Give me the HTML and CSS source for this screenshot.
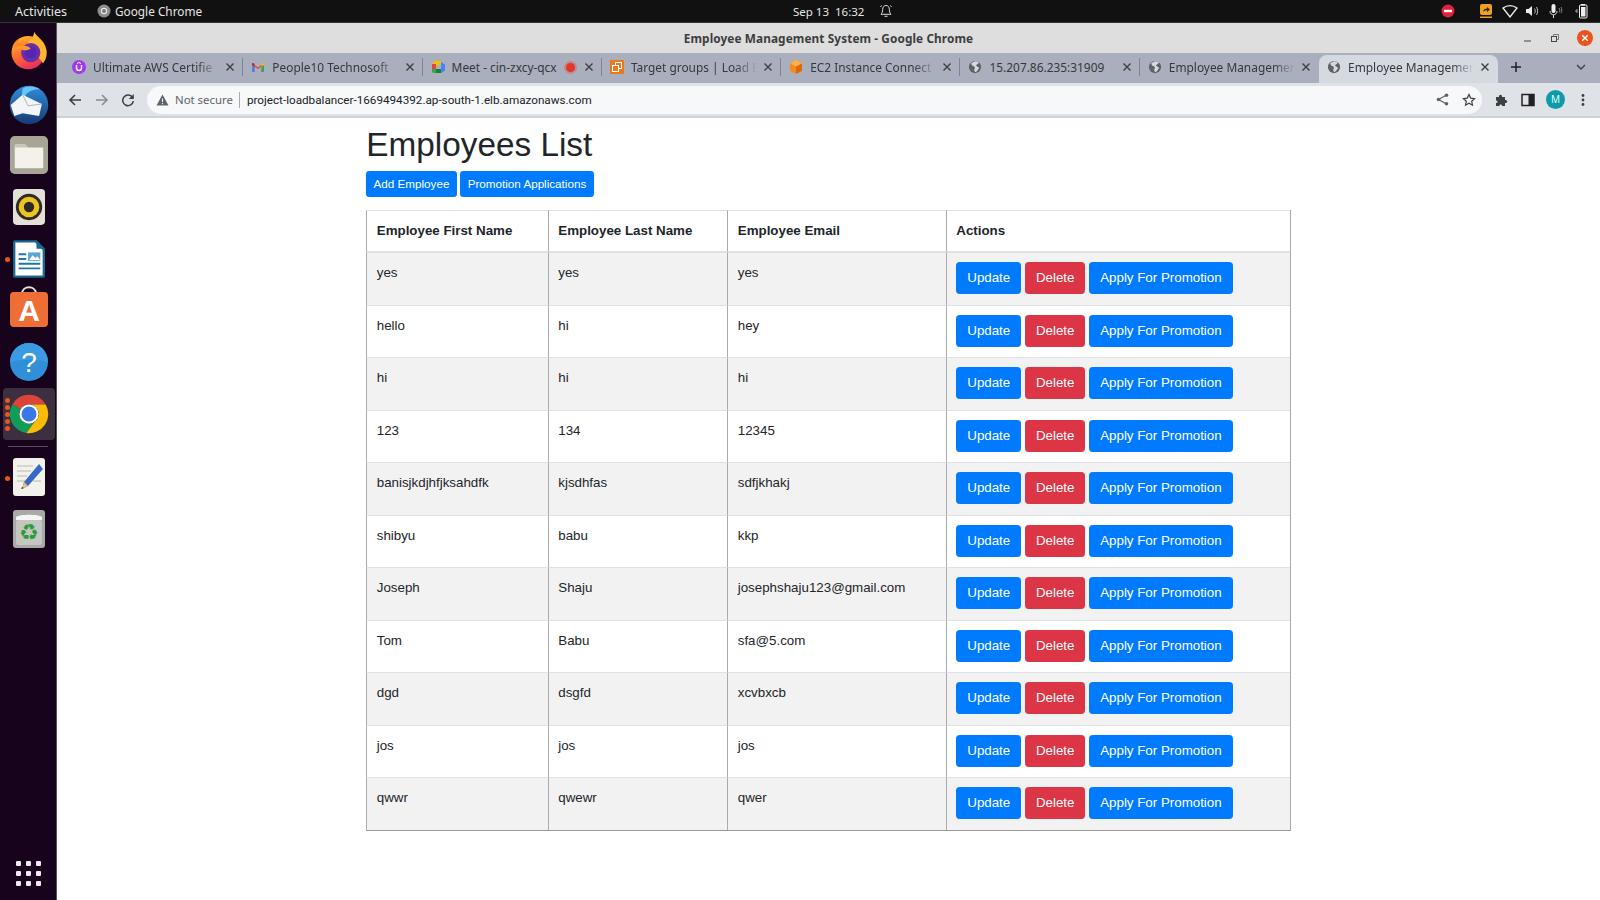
FILE: index.html
```html
<!DOCTYPE html>
<html lang="en">
<head>
  <meta charset="UTF-8">
  <title>Employee Management System</title>
  <link rel="stylesheet" href="styles.css">
</head>
<body>
  <svg class="defs" width="0" height="0">
    <defs>
      <symbol id="globe" viewBox="0 0 16 16">
        <circle cx="8" cy="8" r="7" fill="#5f6368"/>
        <path d="M8 1.500c-1 1-3.500 1-4.500 2.500L5 6.500l2 .5 1 2-1 2 1 3c2-1 3-2 3.500-3.500L13 9l-2.500-1.500L9 6l2-1.500L12.500 3C11 2 9.500 1.500 8 1.500z" fill="#d5d8df"/>
      </symbol>
      <symbol id="close-x" viewBox="0 0 10 10">
        <path d="M1.500 1.500l7 7M8.500 1.500l-7 7" stroke="#3c4043" stroke-width="1.400" fill="none"/>
      </symbol>
      <linearGradient id="fx" x1="0.2" y1="0" x2="0.7" y2="1">
        <stop offset="0" stop-color="#ffbd2e"/>
        <stop offset="0.5" stop-color="#ff6a2b"/>
        <stop offset="1" stop-color="#e8256a"/>
      </linearGradient>
      <linearGradient id="tb" x1="0" y1="0" x2="0" y2="1">
        <stop offset="0" stop-color="#2f8fdc"/>
        <stop offset="1" stop-color="#163a74"/>
      </linearGradient>
    </defs>
  </svg>

  <header class="topbar">
    <span class="activities">Activities</span>
    <span class="app-name">
      <svg width="14" height="14" viewBox="0 0 14 14"><circle cx="7" cy="7" r="6.500" fill="#8d8d8d"/><circle cx="7" cy="7" r="3.200" fill="#e8e8e8"/><circle cx="7" cy="7" r="2" fill="#777"/></svg>
      Google Chrome
    </span>
    <span class="clock">Sep 13&nbsp; 16:32</span>
    <svg class="bell" width="14" height="14" viewBox="0 0 14 14"><path d="M7 1.500c-2.300 0-3.300 1.700-3.300 3.800 0 2.500-.7 3.700-1.700 5h10c-1-1.300-1.700-2.500-1.700-5C10.300 3.200 9.300 1.500 7 1.500zM5.500 12.300h3M1.500 3l1-1.500M12.500 3l-1-1.500" fill="none" stroke="#ddd" stroke-width="1"/></svg>
    <div class="tray">
      <svg class="tray-stop" width="14" height="14" viewBox="0 0 14 14"><circle cx="7" cy="7" r="6.500" fill="#e0233c"/><rect x="3" y="5.800" width="8" height="2.400" fill="#fff"/></svg>
      <svg class="tray-share" width="14" height="16" viewBox="0 0 14 16"><rect x="1" y="1" width="12" height="11" rx="2" fill="#f0a020"/><path d="M4 9c.3-2.500 2-3.500 4-3.500V4l3 2.500L8 9V7.300C6.500 7.300 5 7.800 4 9z" fill="#3a2500"/><rect x="1" y="13.500" width="12" height="1.500" fill="#f0a020"/></svg>
      <svg class="tray-wifi" width="16" height="14" viewBox="0 0 16 14"><path d="M1 4c4.200-3.300 9.800-3.300 14 0L8 13z" fill="none" stroke="#eee" stroke-width="1.300"/></svg>
      <svg class="tray-sound" width="16" height="14" viewBox="0 0 16 14"><path d="M1 5h2.500L7 2v10L3.500 9H1z" fill="#eee"/><path d="M9.500 4.500c1 1.500 1 3.500 0 5M11.500 3c1.500 2.500 1.500 5.500 0 8" fill="none" stroke="#bbb" stroke-width="1"/></svg>
      <svg class="tray-mic" width="16" height="16" viewBox="0 0 16 16"><rect x="3.500" y="1" width="4" height="9" rx="2" fill="#eee"/><path d="M2 8c0 5 7 5 7 0M5.500 12v3" fill="none" stroke="#ddd" stroke-width="1"/><path d="M11 5c1 1.500 1 3 0 4.500M13 4c1 2 1 4 0 6" fill="none" stroke="#888" stroke-width="1"/></svg>
      <svg class="tray-battery" width="14" height="16" viewBox="0 0 14 16"><path d="M3 6v4M1 8h2" stroke="#aaa" stroke-width="1"/><rect x="5.500" y="2" width="7.500" height="13" rx="1" fill="none" stroke="#eee" stroke-width="1"/><rect x="7" y="1" width="4" height="1.500" fill="#eee"/><rect x="7" y="4" width="4.500" height="9.500" fill="#eee"/></svg>
    </div>
  </header>

  <div class="desktop">
    <nav class="dock">
      <div class="dock-item">
        <svg class="icon-firefox" width="42" height="42" viewBox="0 0 48 48">
          <circle cx="23" cy="27" r="19" fill="url(#fx)"/>
          <path d="M30 3c2 6 12 9 14 21 1 6-1 12-4 15l-10-13-8-10c3-3 7-6 8-13z" fill="#ffb52c"/>
          <path d="M5 20c2-5 5-8 8-9-1 2-1 4 0 5 3-2 7-2 10-1l-6 6z" fill="#ff8a22"/>
          <circle cx="26" cy="27" r="11" fill="#6b2ea8"/>
          <circle cx="26" cy="27" r="7" fill="#5527b0"/>
          <path d="M9 21c5-3 12-3 17 1-3 3-8 3-11 1-2-1-4-1-6-2z" fill="#ff9a2a"/>
        </svg>
      </div>
      <div class="dock-item">
        <svg width="44" height="44" viewBox="0 0 48 48">
          <circle cx="24" cy="25" r="21" fill="url(#tb)"/>
          <path d="M17 7c5-3 13-3 19 1-7 0-13 2-16 7l-4 2z" fill="#6cc4f5"/>
          <path d="M4 25l13-11 21 10-3 13-18-3-9 3z" fill="#f3f5f8"/>
          <path d="M17 14l6 12 15-2" fill="none" stroke="#9fb2c8" stroke-width="1"/>
        </svg>
      </div>
      <div class="dock-item">
        <svg width="38" height="38" viewBox="0 0 40 40">
          <rect width="40" height="40" rx="5" fill="#a8a496"/>
          <path d="M6 9h10l3 3h15a1 1 0 0 1 1 1v20a1 1 0 0 1-1 1H6a1 1 0 0 1-1-1V10a1 1 0 0 1 1-1z" fill="#f4f1ea"/>
          <path d="M6 9h10l3 3H5v-2a1 1 0 0 1 1-1z" fill="#c9c5b8"/>
        </svg>
      </div>
      <div class="dock-item">
        <svg width="32" height="38" viewBox="0 0 34 38">
          <rect width="34" height="38" rx="4" fill="#e4e0d8"/>
          <circle cx="17" cy="19" r="14" fill="#2f2c28"/>
          <circle cx="17" cy="19" r="11" fill="#eec51d"/>
          <circle cx="17" cy="19" r="5.500" fill="#2b2a26"/>
        </svg>
      </div>
      <div class="dock-item has-dot">
        <svg width="32" height="38" viewBox="0 0 34 40">
          <path d="M2 0h23l9 9v29a2 2 0 0 1-2 2H2a2 2 0 0 1-2-2V2a2 2 0 0 1 2-2z" fill="#18678f"/>
          <path d="M2.500 2.500h21l8 8v27h-29z" fill="#fff"/>
          <path d="M25 0l9 9h-9z" fill="#18678f"/>
          <path d="M6 15h8M6 20h8M6 25h23M6 30h23" stroke="#1b78a8" stroke-width="2"/>
          <rect x="16" y="13" width="13" height="9" fill="#5aa7d6"/>
          <path d="M17 21l4-5 3 3 2-2 3 4z" fill="#fff"/>
        </svg>
      </div>
      <div class="dock-item">
        <svg class="icon-bag" width="38" height="42" viewBox="0 0 38 42">
          <path d="M12 9c0-9 14-9 14 0" fill="none" stroke="#e8e2dc" stroke-width="2"/>
          <rect y="7" width="38" height="35" rx="4" fill="#ee6e36"/>
          <text x="19" y="36" class="bag-letter">A</text>
        </svg>
      </div>
      <div class="dock-item">
        <svg width="38" height="38" viewBox="0 0 38 38">
          <circle cx="19" cy="19" r="19" fill="#2f8fd8"/>
          <path d="M0 19a19 19 0 0 1 38 0c-12-3-26-3-38 0z" fill="#3b9be2"/>
          <text x="19" y="29" class="help-mark">?</text>
        </svg>
      </div>
      <div class="dock-item is-active">
        <span class="dots"><i></i><i></i><i></i><i></i><i></i></span>
        <svg width="42" height="42" viewBox="0 0 48 48">
          <path d="M24 2A22 22 0 0 1 43.050 13H24A11 11 0 0 0 14.470 18.500L4.950 13A22 22 0 0 1 24 2z" fill="#db4437"/>
          <path d="M4.950 13A22 22 0 0 0 21 45.800L30 33.500A11 11 0 0 1 14.470 29.500 11 11 0 0 1 14.470 18.500z" fill="#0f9d58"/>
          <path d="M43.050 13A22 22 0 0 1 21 45.800L30 33.500A11 11 0 0 0 33.500 18.500 11 11 0 0 0 24 13z" fill="#fbbc05"/>
          <circle cx="24" cy="24" r="11" fill="#fff"/>
          <circle cx="24" cy="24" r="8.500" fill="#3b78e7"/>
        </svg>
      </div>
      <hr class="dock-sep">
      <div class="dock-item has-dot">
        <svg width="32" height="38" viewBox="0 0 32 38">
          <rect width="32" height="38" rx="3" fill="#f3f1ec"/>
          <path d="M4 8h16M4 13h14M4 18h10M4 23h8M20 23h8" stroke="#bbb8ae" stroke-width="1"/>
          <path d="M26 6l4 5-15 17-6 3 2-7z" fill="#3668c4"/>
          <path d="M11 24l4 4-6 3z" fill="#e8c07a"/>
          <path d="M9 29l2 1-3 1z" fill="#333"/>
        </svg>
      </div>
      <div class="dock-item">
        <svg width="32" height="38" viewBox="0 0 32 38">
          <rect width="32" height="38" rx="3" fill="#a7aaa5"/>
          <path d="M3 7c3-3 23-3 26 0v3H3z" fill="#f5f5f3"/>
          <rect x="3" y="10" width="26" height="25" rx="2" fill="#c4c6c1"/>
          <text x="16" y="30" class="recycle">♻</text>
        </svg>
      </div>
      <div class="apps-grid">
        <i></i><i></i><i></i><i></i><i></i><i></i><i></i><i></i><i></i>
      </div>
    </nav>

    <div class="window">
      <div class="titlebar">
        <span class="win-title">Employee Management System - Google Chrome</span>
        <div class="win-controls">
          <svg width="10" height="10" viewBox="0 0 10 10"><path d="M1 8h7" stroke="#444" stroke-width="1"/></svg>
          <svg width="10" height="10" viewBox="0 0 10 10"><rect x="1.500" y="3.500" width="5" height="5" fill="none" stroke="#444"/><path d="M3.500 3.500v-2h5v5h-2" fill="none" stroke="#777"/></svg>
          <svg width="16" height="16" viewBox="0 0 16 16"><circle cx="8" cy="8" r="8" fill="#e95420"/><path d="M5.200 5.200l5.600 5.600M10.800 5.200l-5.600 5.600" stroke="#fff" stroke-width="1.400"/></svg>
        </div>
      </div>

      <div class="tabstrip">
        <div class="tab">
          <svg class="favicon" viewBox="0 0 14 14"><circle cx="7" cy="7" r="7" fill="#a435f0"/><path d="M4.500 5v3a2.500 2.500 0 0 0 5 0V5" fill="none" stroke="#fff" stroke-width="1.400"/><path d="M5 3.500l2-1 2 1" fill="none" stroke="#fff"/></svg>
          <span class="tab-title">Ultimate AWS Certifie</span>
          <svg class="tab-close"><use href="#close-x"/></svg>
        </div>
        <div class="tab">
          <svg class="favicon" viewBox="0 0 14 14"><path d="M1 3v9h2.500V6.500L7 9l3.500-2.500V12H13V3l-6 4.500z" fill="#ea4335"/><path d="M1 3v3l2.500 2V3.500z" fill="#c5221f"/><path d="M13 3v3l-2.500 2V3.500z" fill="#fbbc04"/><path d="M10.500 6.500V12H13V5z" fill="#34a853"/><path d="M1 5v7h2.500V6.500z" fill="#4285f4"/></svg>
          <span class="tab-title">People10 Technosoft</span>
          <svg class="tab-close"><use href="#close-x"/></svg>
        </div>
        <div class="tab">
          <svg class="favicon" viewBox="0 0 14 14"><path d="M1 4l3-3h6v4H5v4H1z" fill="#fbbc04"/><path d="M1 9h4v4H2.500A1.500 1.500 0 0 1 1 11.500z" fill="#34a853"/><path d="M5 9h5v4H5z" fill="#188038"/><path d="M10 2v11l4-2.500v-6z" fill="#4285f4"/><path d="M1 4h4v5H1z" fill="#ea4335"/></svg>
          <span class="tab-title no-fade">Meet - cin-zxcy-qcx</span>
          <span class="rec-dot"></span>
          <svg class="tab-close"><use href="#close-x"/></svg>
        </div>
        <div class="tab">
          <svg class="favicon" viewBox="0 0 14 14"><rect width="14" height="14" rx="1" fill="#e8791c"/><rect x="5.500" y="2.500" width="6" height="6" fill="none" stroke="#fff"/><rect x="2.500" y="5.500" width="6" height="6" fill="#e8791c" stroke="#fff"/></svg>
          <span class="tab-title">Target groups | Load E</span>
          <svg class="tab-close"><use href="#close-x"/></svg>
        </div>
        <div class="tab">
          <svg class="favicon" viewBox="0 0 14 14"><path d="M7 0l6 3.200v7.600L7 14l-6-3.200V3.200z" fill="#f58a1f"/><path d="M7 6.500L13 3.200v7.600L7 14z" fill="#d96a10"/><path d="M7 6.500L1 3.200 7 0l6 3.200z" fill="#fbb04a"/></svg>
          <span class="tab-title">EC2 Instance Connect</span>
          <svg class="tab-close"><use href="#close-x"/></svg>
        </div>
        <div class="tab">
          <svg class="favicon"><use href="#globe"/></svg>
          <span class="tab-title no-fade">15.207.86.235:31909</span>
          <svg class="tab-close"><use href="#close-x"/></svg>
        </div>
        <div class="tab before-active">
          <svg class="favicon"><use href="#globe"/></svg>
          <span class="tab-title">Employee Managemer</span>
          <svg class="tab-close"><use href="#close-x"/></svg>
        </div>
        <div class="tab tab-active">
          <svg class="favicon"><use href="#globe"/></svg>
          <span class="tab-title">Employee Managemer</span>
          <svg class="tab-close"><use href="#close-x"/></svg>
        </div>
        <svg class="new-tab" width="12" height="12" viewBox="0 0 12 12"><path d="M6 1v10M1 6h10" stroke="#202124" stroke-width="1.500"/></svg>
        <svg class="tab-search" width="10" height="6" viewBox="0 0 10 6"><path d="M1 1l4 4 4-4" fill="none" stroke="#3c4043" stroke-width="1.400"/></svg>
      </div>

      <div class="toolbar">
        <svg class="nav-icon" width="14" height="14" viewBox="0 0 14 14"><path d="M13 7H2M7 2L2 7l5 5" fill="none" stroke="#3c4043" stroke-width="1.600"/></svg>
        <svg class="nav-icon nav-forward" width="14" height="14" viewBox="0 0 14 14"><path d="M1 7h11M7 2l5 5-5 5" fill="none" stroke="#8b8f94" stroke-width="1.600"/></svg>
        <svg class="nav-icon nav-reload" width="14" height="14" viewBox="0 0 14 14"><path d="M11.500 4.500A5.300 5.300 0 1 0 12.300 8" fill="none" stroke="#3c4043" stroke-width="1.500"/><path d="M12.800 1v5h-5z" fill="#3c4043"/></svg>
        <div class="omnibox">
          <svg class="warn" width="13" height="12" viewBox="0 0 13 12"><path d="M6.500 .5l6 11H.5z" fill="#5f6368"/><path d="M6.500 4.500v3.500M6.500 9v1.200" stroke="#f6f8fa" stroke-width="1.100"/></svg>
          <span class="not-secure">Not secure</span>
          <span class="omni-sep"></span>
          <span class="url">project-loadbalancer-1669494392.ap-south-1.elb.amazonaws.com</span>
          <svg class="share" width="13" height="13" viewBox="0 0 13 13"><path d="M10.500 2L2.500 6.500l8 4.500" fill="none" stroke="#5f6368" stroke-width="1.200"/><circle cx="10.500" cy="2.200" r="1.800" fill="#5f6368"/><circle cx="2.500" cy="6.500" r="1.800" fill="#5f6368"/><circle cx="10.500" cy="10.800" r="1.800" fill="#5f6368"/></svg>
          <svg class="star" width="14" height="14" viewBox="0 0 14 14"><path d="M7 1.500l1.700 3.600 3.900.5-2.900 2.700.8 3.900L7 10.300l-3.500 1.900.8-3.900L1.400 5.600l3.900-.5z" fill="none" stroke="#3c4043" stroke-width="1.200"/></svg>
        </div>
        <svg class="puzzle" width="14" height="14" viewBox="0 0 14 14"><path d="M1 4h3c-.5-3 3.500-3 3 0h3v3c3-.5 3 3.500 0 3v3H7c.5-2-3-2-2.500 0H1v-3c2 .5 2-3 0-2.500z" fill="#3c4043"/></svg>
        <svg class="panel" width="14" height="14" viewBox="0 0 14 14"><rect x="1" y="1.500" width="12" height="11" fill="none" stroke="#202124" stroke-width="1.500"/><rect x="7.500" y="1.500" width="5.500" height="11" fill="#202124"/></svg>
        <span class="avatar">M</span>
        <svg class="kebab" width="4" height="14" viewBox="0 0 4 14"><circle cx="2" cy="2.500" r="1.400" fill="#3c4043"/><circle cx="2" cy="7" r="1.400" fill="#3c4043"/><circle cx="2" cy="11.500" r="1.400" fill="#3c4043"/></svg>
      </div>

      <main class="page">
        <div class="container">
          <h1>Employees List</h1>
          <div class="top-actions">
            <a class="btn btn-sm btn-primary">Add Employee</a>
            <a class="btn btn-sm btn-primary">Promotion Applications</a>
          </div>
          <table class="employees">
            <colgroup>
              <col class="col-first"><col class="col-last"><col class="col-email"><col class="col-actions">
            </colgroup>
            <thead>
              <tr><th>Employee First Name</th><th>Employee Last Name</th><th>Employee Email</th><th>Actions</th></tr>
            </thead>
            <tbody>
              <tr><td>yes</td><td>yes</td><td>yes</td><td class="actions"><a class="btn btn-primary">Update</a> <a class="btn btn-danger">Delete</a> <a class="btn btn-primary">Apply For Promotion</a></td></tr>
              <tr><td>hello</td><td>hi</td><td>hey</td><td class="actions"><a class="btn btn-primary">Update</a> <a class="btn btn-danger">Delete</a> <a class="btn btn-primary">Apply For Promotion</a></td></tr>
              <tr><td>hi</td><td>hi</td><td>hi</td><td class="actions"><a class="btn btn-primary">Update</a> <a class="btn btn-danger">Delete</a> <a class="btn btn-primary">Apply For Promotion</a></td></tr>
              <tr><td>123</td><td>134</td><td>12345</td><td class="actions"><a class="btn btn-primary">Update</a> <a class="btn btn-danger">Delete</a> <a class="btn btn-primary">Apply For Promotion</a></td></tr>
              <tr><td>banisjkdjhfjksahdfk</td><td>kjsdhfas</td><td>sdfjkhakj</td><td class="actions"><a class="btn btn-primary">Update</a> <a class="btn btn-danger">Delete</a> <a class="btn btn-primary">Apply For Promotion</a></td></tr>
              <tr><td>shibyu</td><td>babu</td><td>kkp</td><td class="actions"><a class="btn btn-primary">Update</a> <a class="btn btn-danger">Delete</a> <a class="btn btn-primary">Apply For Promotion</a></td></tr>
              <tr><td>Joseph</td><td>Shaju</td><td>josephshaju123@gmail.com</td><td class="actions"><a class="btn btn-primary">Update</a> <a class="btn btn-danger">Delete</a> <a class="btn btn-primary">Apply For Promotion</a></td></tr>
              <tr><td>Tom</td><td>Babu</td><td>sfa@5.com</td><td class="actions"><a class="btn btn-primary">Update</a> <a class="btn btn-danger">Delete</a> <a class="btn btn-primary">Apply For Promotion</a></td></tr>
              <tr><td>dgd</td><td>dsgfd</td><td>xcvbxcb</td><td class="actions"><a class="btn btn-primary">Update</a> <a class="btn btn-danger">Delete</a> <a class="btn btn-primary">Apply For Promotion</a></td></tr>
              <tr><td>jos</td><td>jos</td><td>jos</td><td class="actions"><a class="btn btn-primary">Update</a> <a class="btn btn-danger">Delete</a> <a class="btn btn-primary">Apply For Promotion</a></td></tr>
              <tr><td>qwwr</td><td>qwewr</td><td>qwer</td><td class="actions"><a class="btn btn-primary">Update</a> <a class="btn btn-danger">Delete</a> <a class="btn btn-primary">Apply For Promotion</a></td></tr>
            </tbody>
          </table>
        </div>
      </main>
    </div>
  </div>
</body>
</html>
```

FILE: styles.css
```css
* { box-sizing: border-box; }
html, body { height: 100%; }
body { margin: 0; display: flex; flex-direction: column; height: 900px; overflow: hidden; background: #fff; font-family: "Liberation Sans", Arial, sans-serif; font-size: 13.330px; color: #212529; }
.defs { position: absolute; }

/* ubuntu top bar */
.topbar { flex: none; height: 23px; display: flex; align-items: center; background: #111; color: #e6e6e6; font-family: "Noto Sans", sans-serif; font-size: 11.800px; border-bottom: 1px solid #333; }
.activities { margin-left: 15px; width: 82px; font-size: 12.500px; }
.app-name { display: flex; align-items: center; gap: 4px; width: 120px; }
.clock { margin-left: 576px; width: 86px; font-size: 11.500px; }
.bell { display: block; }
.tray { margin-left: auto; display: flex; align-items: center; }
.tray-stop { margin-right: 24px; }
.tray-share { margin-right: 9px; }
.tray-wifi { margin-right: 7px; }
.tray-sound { margin-right: 7px; }
.tray-mic { margin-right: 10px; }
.tray-battery { margin-right: 12px; }

.desktop { flex: 1; display: flex; min-height: 0; }

/* dock */
.dock { flex: none; width: 57px; display: flex; flex-direction: column; align-items: center; padding-top: 3px; background: #17031c; border-right: 1px solid #555; }
.dock-item { position: relative; flex: none; width: 52px; height: 51.700px; margin-left: 1px; display: flex; align-items: center; justify-content: center; }
.dock-item.is-active { background: #3c2f40; border-radius: 4px; }
.has-dot::before { content: ""; position: absolute; left: 2px; top: 24px; width: 5px; height: 5px; border-radius: 50%; background: #e95420; }
.dots { position: absolute; left: 2px; top: 10px; display: flex; flex-direction: column; gap: 2px; }
.dots i { width: 5px; height: 5px; border-radius: 50%; background: #e95420; }
.dock-sep { width: 40px; height: 1px; margin: 6px 0 5px; border: 0; background: #5a4a5e; flex: none; }
.icon-firefox { margin-bottom: 3px; }
.icon-bag { margin-bottom: 9px; }
.bag-letter { font: bold 30px "Liberation Sans", sans-serif; fill: #fff; text-anchor: middle; }
.help-mark { font: 28px "Liberation Sans", sans-serif; fill: #fff; text-anchor: middle; }
.recycle { font: 22px "DejaVu Sans", sans-serif; fill: #2d9b3a; text-anchor: middle; }
.apps-grid { margin-top: auto; margin-bottom: 14px; display: grid; grid-template-columns: repeat(3, 5px); gap: 5px; }
.apps-grid i { width: 5px; height: 5px; border-radius: 1px; background: #f1e9f1; }

/* chrome window */
.window { flex: 1; min-width: 0; display: flex; flex-direction: column; }
.titlebar { flex: none; height: 30px; display: flex; align-items: center; position: relative; background: #dedede; }
.win-title { flex: 1; text-align: center; font-family: "Noto Sans", sans-serif; font-weight: 700; font-size: 11.800px; color: #3d3d3d; letter-spacing: .1px; }
.win-controls { position: absolute; right: 7px; top: 7px; display: flex; align-items: center; gap: 17px; }

.tabstrip { flex: none; height: 30px; display: flex; align-items: flex-end; padding-left: 7px; background: #a9afbc; font-family: "Noto Sans", sans-serif; font-size: 11.900px; color: #35383d; }
.tab { position: relative; flex: none; width: 179.300px; height: 28px; display: flex; align-items: center; padding: 0 8px 4px 8px; }
.tab::after { content: ""; position: absolute; right: 0; top: 3px; height: 18px; width: 1px; background: #7e8492; }
.tab.before-active::after, .tab-active::after { display: none; }
.tab-active { background: #d5d9e0; border-radius: 8px 8px 0 0; }
.favicon { flex: none; width: 14px; height: 14px; margin-right: 7px; }
.tab-title { flex: 1; min-width: 0; white-space: nowrap; mask-image: linear-gradient(to right, #000 80%, transparent 97%); -webkit-mask-image: linear-gradient(to right, #000 80%, transparent 97%); }
.tab-title.no-fade { mask-image: none; -webkit-mask-image: none; }
.tab-close { flex: none; width: 10px; height: 10px; margin-left: 2px; }
.rec-dot { flex: none; width: 9px; height: 9px; margin-right: 7px; border-radius: 50%; background: #e8352b; box-shadow: 0 0 0 2px rgba(232, 53, 43, .3); }
.new-tab { margin: 0 0 10px 12px; }
.tab-search { margin: 0 0 13px 54px; }

.toolbar { flex: none; height: 35px; display: flex; align-items: center; padding-left: 11px; background: #dfe2e7; border-bottom: 2px solid #cfd1d6; }
.nav-icon { flex: none; }
.nav-forward { margin-left: 13px; }
.nav-reload { margin-left: 12px; }
.omnibox { width: 1335px; height: 28px; margin-left: 12px; display: flex; align-items: center; padding: 0 6px 0 9px; border-radius: 14px; background: #f6f8fa; font-family: "Noto Sans", sans-serif; font-size: 11.400px; color: #202124; }
.not-secure { margin-left: 6px; color: #5f6368; }
.omni-sep { width: 1px; height: 16px; margin: 0 7px 0 6px; background: #a8abaf; }
.url { font-family: Roboto, sans-serif; font-size: 11.700px; }
.share { margin-left: auto; margin-right: 13px; }
.puzzle { margin-left: 13px; }
.panel { margin-left: 12px; }
.avatar { width: 19px; height: 19px; margin-left: 11px; border-radius: 50%; background: #0f9aa8; color: #dff; font-family: "Noto Sans", sans-serif; font-size: 10px; line-height: 19px; text-align: center; }
.kebab { margin-left: 16px; }

/* the page itself */
.page { flex: 1; min-height: 0; background: #fff; }
.container { width: 924.500px; margin: 0 auto; padding-top: 6.500px; }
h1 { margin: 0 0 6.500px; font-size: 33.330px; font-weight: 500; line-height: 40px; }
.top-actions { margin-bottom: 13px; }
.btn { display: inline-block; vertical-align: top; padding: 5px 10px; border: 1px solid transparent; border-radius: 3.300px; color: #fff; font-size: 13.330px; line-height: 20px; }
.btn-sm { padding: 3.300px 6.300px; font-size: 11.670px; line-height: 17.500px; border-radius: 2.700px; }
.btn-primary { background: #007bff; border-color: #007bff; }
.btn-danger { background: #dc3545; border-color: #dc3545; }

.employees { width: 924.500px; table-layout: fixed; border-collapse: separate; border-spacing: 0; line-height: 20px; border-bottom: 1px solid #999; border-right: 1px solid #aaa; }
.col-first { width: 181.500px; }
.col-last { width: 179.500px; }
.col-email { width: 218.500px; }
.col-actions { width: 344.500px; }
.employees th, .employees td { padding: 10px 10px 10px 9.500px; text-align: left; vertical-align: top; border-left: 1px solid #aaa; }
.employees th { height: 41px; border-top: 1px solid #dee2e6; border-bottom: 1px solid #dee2e6; font-weight: 700; }
.employees td { height: 52.500px; border-top: 1px solid #dee2e6; }
.employees td.actions { padding-top: 9px; white-space: nowrap; }
.employees tbody tr:nth-child(odd) td { background: #f2f2f2; }
```
